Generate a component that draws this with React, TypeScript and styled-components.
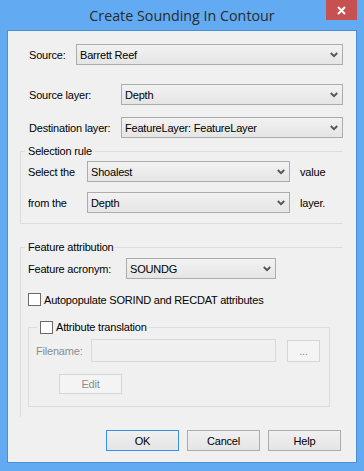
import styled, { createGlobalStyle } from "styled-components";

const GlobalStyle = createGlobalStyle`
  html, body {
    margin: 0;
    padding: 0;
  }
  body {
    width: 364px;
    height: 471px;
    overflow: hidden;
    font-family: "Liberation Sans", Arial, sans-serif;
    font-size: 11px;
    letter-spacing: -0.2px;
    color: #000;
  }
`;

const Window = styled.div`
  display: flex;
  flex-direction: column;
  width: 364px;
  height: 471px;
  box-sizing: border-box;
  padding: 0 7px 8px 7px;
  background: #62aaf2;
`;

const TitleBar = styled.div`
  display: grid;
  grid-template-columns: 1fr auto 1fr;
  height: 30px;
  flex: 0 0 30px;
`;

const Title = styled.div`
  grid-column: 2;
  font-family: "Open Sans", "Noto Sans", sans-serif;
  font-size: 14.3px;
  letter-spacing: 0;
  line-height: 31px;
  color: #2b2b2b;
  white-space: nowrap;
`;

const CloseButton = styled.div`
  grid-column: 3;
  justify-self: end;
  display: flex;
  align-items: center;
  justify-content: center;
  width: 31px;
  height: 20px;
  background: #c75050;
`;

const Client = styled.div`
  flex: 1;
  display: flex;
  flex-direction: column;
  background: #f0f0f0;
  border: 1px solid #4a8ed8;
  padding: 13px 13px 0 12px;
`;

const Row = styled.div<{ $mt?: number; $pl?: number }>`
  display: flex;
  align-items: center;
  margin-top: ${({ $mt }) => $mt ?? 0}px;
  padding-left: ${({ $pl }) => $pl ?? 9}px;
`;

const Label = styled.span<{ $w?: number; $disabled?: boolean }>`
  flex: 0 0 ${({ $w }) => ($w ? `${$w}px` : "auto")};
  color: ${({ $disabled }) => ($disabled ? "#8d8d8d" : "#000")};
  white-space: nowrap;
`;

const Combo = styled.div<{ $w?: number }>`
  flex: ${({ $w }) => ($w ? `0 0 ${$w}px` : "1")};
  display: flex;
  align-items: center;
  justify-content: space-between;
  height: 21px;
  box-sizing: border-box;
  border: 1px solid #acacac;
  background: linear-gradient(#f2f2f2, #e5e5e5);
  padding: 0 4px 0 3px;
`;

const Suffix = styled.span<{ $gap: number }>`
  margin-left: ${({ $gap }) => $gap}px;
`;

const Group = styled.fieldset<{ $mt: number; $pb: number; $bottom?: boolean }>`
  margin: ${({ $mt }) => $mt}px 0 0 0;
  padding: 0 0 ${({ $pb }) => $pb}px 0;
  min-width: 0;
  border: none;
  border-top: 1px solid #dcdcdc;
  border-left: 1px solid #dcdcdc;
  border-bottom: ${({ $bottom }) => ($bottom ? "1px solid #dcdcdc" : "none")};
`;

const Legend = styled.legend<{ $ml: number }>`
  display: flex;
  align-items: center;
  margin-left: ${({ $ml }) => $ml}px;
  padding: 0 2px 0 3px;
  line-height: 13px;
`;

const SubGroup = styled.fieldset`
  margin: 15px 0 0 7px;
  padding: 0 0 12px 0;
  width: 302px;
  box-sizing: border-box;
  min-width: 0;
  border: 1px solid #dcdcdc;
`;

const Checkbox = styled.span`
  flex: 0 0 13px;
  width: 13px;
  height: 13px;
  box-sizing: border-box;
  border: 1px solid #6b6b6b;
  background: #fff;
  margin-right: 3px;
`;

const TextBox = styled.div`
  flex: 0 0 185px;
  height: 23px;
  box-sizing: border-box;
  border: 1px solid #d9d9d9;
  background: #f0f0f0;
`;

const DisabledButton = styled.div<{ $w: number; $h: number; $ml?: number }>`
  flex: 0 0 ${({ $w }) => $w}px;
  height: ${({ $h }) => $h}px;
  margin-left: ${({ $ml }) => $ml ?? 0}px;
  box-sizing: border-box;
  display: flex;
  align-items: center;
  justify-content: center;
  border: 1px solid #d5d5d5;
  background: #f4f4f4;
  color: #8d8d8d;
`;

const ButtonBar = styled.div`
  display: flex;
  justify-content: flex-end;
  gap: 8px;
  margin-top: 13px;
  padding-right: 2px;
`;

const Button = styled.div<{ $default?: boolean }>`
  width: 73px;
  height: 21px;
  box-sizing: border-box;
  display: flex;
  align-items: center;
  justify-content: center;
  border: 1px solid ${({ $default }) => ($default ? "#3c8fe6" : "#acacac")};
  background: linear-gradient(#f0f0f0, #e5e5e5);
`;

function Chevron() {
  return (
    <svg width="8" height="6" viewBox="0 0 8 6">
      <polyline
        points="0.8,1 4,4.2 7.2,1"
        fill="none"
        stroke="#555"
        strokeWidth="1.9"
      />
    </svg>
  );
}

function Select({ value, width }: { value: string; width?: number }) {
  return (
    <Combo $w={width}>
      <span>{value}</span>
      <Chevron />
    </Combo>
  );
}

export default function App() {
  return (
    <>
      <GlobalStyle />
      <Window>
        <TitleBar>
          <Title>Create Sounding In Contour</Title>
          <CloseButton>
            <svg width="9" height="9" viewBox="0 0 9 9">
              <path d="M1 1 L8 8 M8 1 L1 8" stroke="#fff" strokeWidth="2" />
            </svg>
          </CloseButton>
        </TitleBar>
        <Client>
          <Row>
            <Label $w={47}>Source:</Label>
            <Select value="Barrett Reef" />
          </Row>
          <Row $mt={19}>
            <Label $w={92}>Source layer:</Label>
            <Select value="Depth" />
          </Row>
          <Row $mt={12}>
            <Label $w={92}>Destination layer:</Label>
            <Select value="FeatureLayer: FeatureLayer" />
          </Row>

          <Group $mt={7} $pb={10} $bottom>
            <Legend $ml={4}>Selection rule</Legend>
            <Row $mt={3} $pl={7}>
              <Label $w={59}>Select the</Label>
              <Select value="Shoalest" width={203} />
              <Suffix $gap={10}>value</Suffix>
            </Row>
            <Row $mt={10} $pl={7}>
              <Label $w={59}>from the</Label>
              <Select value="Depth" width={203} />
              <Suffix $gap={10}>layer.</Suffix>
            </Row>
          </Group>

          <Group $mt={17} $pb={10}>
            <Legend $ml={4}>Feature attribution</Legend>
            <Row $mt={4} $pl={7}>
              <Label $w={98}>Feature acronym:</Label>
              <Select value="SOUNDG" width={150} />
            </Row>
            <Row $mt={14} $pl={7}>
              <Checkbox />
              <Label>Autopopulate SORIND and RECDAT attributes</Label>
            </Row>
            <SubGroup>
              <Legend $ml={8}>
                <Checkbox />
                <Label>Attribute translation</Label>
              </Legend>
              <Row $mt={5} $pl={7}>
                <Label $w={55} $disabled>
                  Filename:
                </Label>
                <TextBox />
                <DisabledButton $w={33} $h={22} $ml={11}>
                  ...
                </DisabledButton>
              </Row>
              <Row $mt={12} $pl={30}>
                <DisabledButton $w={63} $h={20}>
                  Edit
                </DisabledButton>
              </Row>
            </SubGroup>
          </Group>

          <ButtonBar>
            <Button $default>OK</Button>
            <Button>Cancel</Button>
            <Button>Help</Button>
          </ButtonBar>
        </Client>
      </Window>
    </>
  );
}
